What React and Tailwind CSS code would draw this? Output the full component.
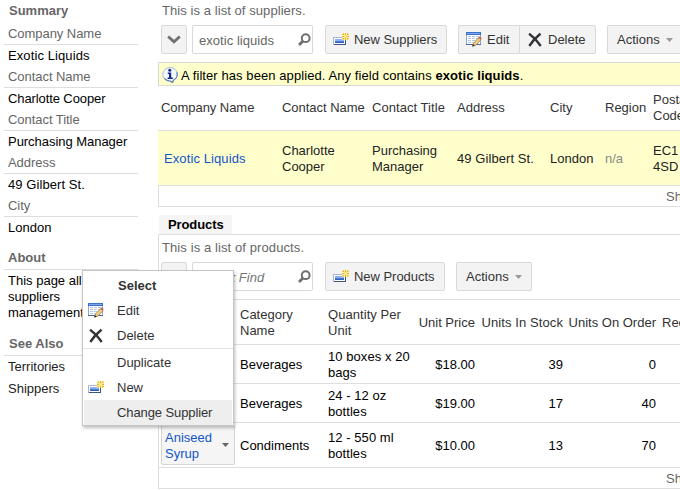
import React from 'react';

const summary = [
    { label: 'Company Name', value: 'Exotic Liquids', tracking: 'tracking-[0.1px]' },
    { label: 'Contact Name', value: 'Charlotte Cooper', tracking: 'tracking-[-0.1px]' },
    { label: 'Contact Title', value: 'Purchasing Manager', tracking: 'tracking-[-0.04px]' },
    { label: 'Address', value: '49 Gilbert St.', tracking: 'tracking-[0.08px]' },
    { label: 'City', value: 'London', tracking: '' },
];

const products = [
    { name: 'Chai', category: 'Beverages', quantity: '10 boxes x 20 bags', price: '$18.00', stock: 39, order: 0 },
    { name: 'Chang', category: 'Beverages', quantity: '24 - 12 oz bottles', price: '$19.00', stock: 17, order: 40 },
    { name: 'Aniseed Syrup', category: 'Condiments', quantity: '12 - 550 ml bottles', price: '$10.00', stock: 13, order: 70 },
];

const NewIcon = () => (
    <svg className="w-4 h-4 shrink-0" viewBox="0 0 16 16" shapeRendering="crispEdges">
        <rect x="0" y="5" width="13" height="8" fill="#a9b6cb" />
        <rect x="1" y="6" width="11" height="6" fill="#fff" />
        <rect x="1" y="12" width="12" height="1" fill="#3b5480" />
        <rect x="12" y="6" width="1" height="7" fill="#3b5480" />
        <rect x="2" y="7" width="9" height="4" fill="#4a7bd6" />
        <rect x="2" y="7" width="9" height="2" fill="#8db0ee" />
        <rect x="2" y="10" width="9" height="1" fill="#2f5fc0" />
        <rect x="9" y="1" width="7" height="7" fill="#fbeeb0" />
        <path d="M12 1h1v7h-1zM9 4h7v1H9zM10 2h1v1h-1zM14 2h1v1h-1zM10 6h1v1h-1zM14 6h1v1h-1z" fill="#e3b62c" />
        <path d="M10 1h1v1h-1zM14 1h1v1h-1zM9 2h1v1H9zM15 2h1v1h-1zM9 6h1v1H9zM15 6h1v1h-1zM10 7h1v1h-1zM14 7h1v1h-1z" fill="#efcb55" />
        <rect x="11" y="3" width="3" height="3" fill="#fbe36a" />
        <rect x="12" y="4" width="1" height="1" fill="#fffde8" />
    </svg>
);

const EditIcon = () => (
    <svg className="w-4 h-4 shrink-0" viewBox="0 0 16 16">
        <g shapeRendering="crispEdges">
            <rect x="0" y="0" width="15" height="13" fill="#8ba6d2" />
            <rect x="0" y="0" width="15" height="3" fill="#3d6fce" />
            <rect x="1" y="1" width="13" height="1" fill="#7da5ec" />
            <rect x="1" y="3" width="13" height="9" fill="#fff" />
            <path d="M2 4h3v1H2zM6 4h3v1H6zM10 4h3v1h-3zM2 6h3v1H2zM6 6h3v1H6zM10 6h3v1h-3zM2 8h3v1H2zM6 8h3v1H6zM2 10h3v1H2zM6 10h2v1H6z" fill="#b5c6e2" />
            <rect x="0" y="12" width="15" height="1" fill="#4a6799" />
        </g>
        <path d="M6.6 14.2l1.2-3.4 4.8-5.2 2.4 2-4.9 5.4z" fill="#f2cd7c" stroke="#86683a" strokeWidth=".7" />
        <path d="M12.3 5.8l1-1.1c.8-.4 2.2.6 2.1 1.6l-.9 1.3z" fill="#c8625c" />
        <path d="M6.3 14.5l.7-2.2 1.7 1.4z" fill="#222" />
    </svg>
);

const DeleteIcon = () => (
    <svg className="w-4 h-4 shrink-0" viewBox="0 0 16 16" fill="none" stroke="#333438" strokeLinecap="square">
        <path d="M3 2.5Q8 6 13 13" strokeWidth="2.4" />
        <path d="M12.6 2.5Q7 7 3 13" strokeWidth="2.4" />
    </svg>
);

const InfoIcon = () => (
    <svg className="w-4 h-4 shrink-0" viewBox="0 0 16 16">
        <path d="M8 .6a7.2 6.7 0 0 1 3.4 12.6L10.6 15.4 8 14A7.2 6.7 0 0 1 8 .6z" fill="#f3f8ff" stroke="#a9bcd8" />
        <path d="M14.8 5.2a7.2 6.7 0 0 1-3.4 8L10.6 15.4 8 14Q4.5 14 2.2 11.4" fill="none" stroke="#5d83bd" strokeWidth="1.2" />
        <circle cx="7.8" cy="3.3" r="1.5" fill="#142a94" />
        <path d="M5.8 5.5h3.4v5h1.6V12H5.6v-1.5H7V7H5.8z" fill="#142a94" />
    </svg>
);

const SearchIcon = () => (
    <svg className="w-[14px] h-[14px] shrink-0" viewBox="0 0 14 14" fill="none" stroke="#707070">
        <circle cx="8.7" cy="5.2" r="3.9" strokeWidth="2" />
        <path d="M5.8 8.2L2 12" strokeWidth="2.8" />
    </svg>
);

const Caret = ({ className }) => (
    <svg className={`w-[7px] h-1 shrink-0 ${className}`} viewBox="0 0 7 4" fill="currentColor">
        <path d="M0 0h7L3.5 4z" />
    </svg>
);

const button = 'flex items-center h-[29px] border border-[#d9d9d9] rounded-[2px] bg-[#f3f3f3] text-[#333] whitespace-nowrap shrink-0';

const Toolbar = ({ search, placeholder, createLabel, createWidth, children }) => (
    <div className="flex pl-[3px]">
        <button className={`${button} w-[26px] justify-center`}>
            <svg className="w-[14px] h-[9px] shrink-0" viewBox="0 0 14 9" fill="none" stroke="#707070" strokeWidth="2.8">
                <path d="M1.2 1.4l5.8 5.4 5.8-5.4" />
            </svg>
        </button>
        <div className="flex items-center justify-between w-[121px] h-[29px] ml-[5px] shrink-0 border border-[#d9d9d9] rounded-[2px] pl-1.5 pr-px pt-px">
            <span className={placeholder ? 'italic text-[#777] pl-[3px] pt-0.5' : 'text-[#666] pt-0.5 tracking-[0.05px]'}>
                {search || placeholder}
            </span>
            <SearchIcon />
        </div>
        <button className={`${button} ml-3 pl-[7px] ${createWidth}`}>
            <NewIcon />
            <span className="ml-[5px] tracking-[-0.04px]">{createLabel}</span>
        </button>
        {children}
    </div>
);

const ActionsButton = () => (
    <button className={`${button} w-[76px] ml-[11px] pl-[9px]`}>
        Actions
        <Caret className="ml-[6px] text-[#999]" />
    </button>
);

const SideHeader = ({ children, className }) => (
    <h3 className={`font-bold text-[#666] ${className}`}>{children}</h3>
);

const Sidebar = () => (
    <aside className="w-[158px] shrink-0 pl-1 pr-5 text-black">
        <SideHeader className="h-[22px] pt-[3px] pl-[5px]">Summary</SideHeader>
        {summary.map((item) => (
            <div key={item.label}>
                <div className="h-[23px] pt-1 pl-1 border-b border-[#dedede] text-[#666] tracking-[-0.05px]">{item.label}</div>
                <div className={`h-5 pt-[3px] pl-1 whitespace-nowrap ${item.tracking}`}>{item.value}</div>
            </div>
        ))}
        <SideHeader className="h-[33px] pt-[13px] pl-1 border-b border-[#dedede]">About</SideHeader>
        <p className="pt-[3px] pl-1">This page allows suppliers management.</p>
        <SideHeader className="h-[35px] pt-[15px] pl-[5px] border-b border-[#dedede]">See Also</SideHeader>
        <ul className="pl-1">
            <li className="h-[22px] pt-[3px] text-[#222]">Territories</li>
            <li className="h-[22px] pt-[3px] text-[#222]">Shippers</li>
        </ul>
    </aside>
);

const supplierCols = 'grid grid-cols-[124px_90px_85px_93px_55px_48px_60px] items-center';
const productCols = 'grid grid-cols-[82px_88px_75px_72px_88px_93px_6px_60px] items-center';

const Suppliers = () => (
    <section>
        <p className="h-[25px] pt-[3px] pl-1 text-[#666] tracking-[0.07px]">This is a list of suppliers.</p>
        <Toolbar search="exotic liquids" createLabel="New Suppliers" createWidth="w-[122px]">
            <div className="flex ml-[11px] shrink-0">
                <button className={`${button} w-[61px] pl-[7px] border-r-0 rounded-r-none`}>
                    <EditIcon />
                    <span className="ml-[5px]">Edit</span>
                </button>
                <button className={`${button} w-[77px] pl-[7px] rounded-l-none`}>
                    <DeleteIcon />
                    <span className="ml-[5px]">Delete</span>
                </button>
            </div>
            <ActionsButton />
        </Toolbar>
        <div className="flex items-center h-6 mt-2 pl-[3px] pt-px border border-r-0 border-[#d9d9d9] bg-[#ffffcc] text-black whitespace-nowrap">
            <InfoIcon />
            <span className="ml-[3px] pt-[3px] tracking-[0.08px]">
                A filter has been applied. Any field contains <b>exotic liquids</b>.
            </span>
        </div>
        <div className={`${supplierCols} h-[45px] border-b border-[#dedede] text-[#333]`}>
            <span className="pl-[3px] tracking-[-0.05px]">Company Name</span>
            <span className="tracking-[-0.03px]">Contact Name</span>
            <span className="tracking-[0.05px]">Contact Title</span>
            <span>Address</span>
            <span>City</span>
            <span>Region</span>
            <span>Postal<br />Code</span>
        </div>
        <div className={`${supplierCols} h-[55px] pt-px border-b border-[#dedede] bg-[#ffffcc] text-[#222]`}>
            <a className="pl-1.5 text-[#15c] tracking-[0.1px]">Exotic Liquids</a>
            <span>Charlotte<br />Cooper</span>
            <span>Purchasing<br />Manager</span>
            <span className="tracking-[0.08px]">49 Gilbert St.</span>
            <span>London</span>
            <span className="text-[#888]">n/a</span>
            <span>EC1<br />4SD</span>
        </div>
        <div className="h-[21px] pt-[3px] pl-[507px] border-b border-l border-[#dedede] text-[#666] whitespace-nowrap">Show</div>
    </section>
);

const Products = () => (
    <section>
        <h2 className="w-[73px] h-[19px] ml-px mt-2 pt-0.5 pl-[9px] bg-[#f5f5f5] font-bold text-black tracking-[-0.1px]">Products</h2>
        <div className="border border-r-0 border-[#dedede]">
            <p className="h-[27px] pt-[5px] pl-[3px] text-[#666] tracking-[0.1px]">This is a list of products.</p>
            <div className="-ml-px">
                <Toolbar placeholder="Quick Find" createLabel="New Products" createWidth="w-[120px]">
                    <ActionsButton />
                </Toolbar>
            </div>
            <div className="h-[46px] mt-2 border-y border-[#dedede]">
                <div className={`${productCols} h-11 -ml-px pt-px text-[#333]`}>
                    <span className="pl-[3px]">Product<br />Name</span>
                    <span>Category<br />Name</span>
                    <span className="tracking-[0.06px]">Quantity Per<br />Unit</span>
                    <span className="text-right whitespace-nowrap">Unit Price</span>
                    <span className="text-right whitespace-nowrap tracking-[0.09px]">Units In Stock</span>
                    <span className="text-right whitespace-nowrap">Units On Order</span>
                    <span />
                    <span>Reorder</span>
                </div>
            </div>
            {products.map((p, i) => (
                <div key={p.name} className={`border-b border-[#dedede] ${i === 2 ? 'h-[45px]' : 'h-[39px]'}`}>
                    <div className={`${productCols} h-full -ml-px pt-px text-black`}>
                        {i === 2 ? (
                            <div className="flex items-center w-[74px] h-10 -mt-px ml-[3px] pl-[3px] border border-[#d5d5d5] rounded-[2px] bg-[#f5f5f5]">
                                <a className="w-[57px] pt-px text-[#15c]">{p.name}</a>
                                <Caret className="text-[#666]" />
                            </div>
                        ) : (
                            <a className="pl-1.5 text-[#15c]">{p.name}</a>
                        )}
                        <span>{p.category}</span>
                        <span className="w-[84px] tracking-[0.06px]">{p.quantity}</span>
                        <span className="text-right">{p.price}</span>
                        <span className="text-right">{p.stock}</span>
                        <span className="text-right">{p.order}</span>
                    </div>
                </div>
            ))}
            <div className="h-5 pt-[3px] pl-[507px] text-[#666] whitespace-nowrap">Show</div>
        </div>
    </section>
);

const MenuItem = ({ icon, children, className = '' }) => (
    <li className={`flex items-center h-[25px] pl-1 text-[#333] ${className}`}>
        <span className="w-[29px] shrink-0">{icon}</span>
        <span className="pt-px">{children}</span>
    </li>
);

const ContextMenu = () => (
    <ul className="absolute left-[82px] top-[270px] w-[152px] h-[156px] px-px pt-0.5 bg-white border border-[#c6c6c6] shadow-[1px_2px_3px_rgba(0,0,0,0.25)]">
        <MenuItem className="font-bold pl-[5px]">Select</MenuItem>
        <MenuItem icon={<EditIcon />}>Edit</MenuItem>
        <MenuItem icon={<DeleteIcon />}>Delete</MenuItem>
        <li className="h-0.5 -mx-px border-t border-[#e5e5e5]" />
        <MenuItem>Duplicate</MenuItem>
        <MenuItem icon={<NewIcon />}>New</MenuItem>
        <MenuItem className="bg-[#eee] tracking-[-0.1px]">Change Supplier</MenuItem>
    </ul>
);

export default function App() {
    return (
        <div className="relative flex w-[680px] h-[490px] overflow-hidden bg-white font-['Liberation_Sans',Arial,sans-serif] text-[13px] leading-4">
            <Sidebar />
            <main className="w-[522px] shrink-0 overflow-hidden">
                <Suppliers />
                <Products />
            </main>
            <ContextMenu />
        </div>
    );
}
